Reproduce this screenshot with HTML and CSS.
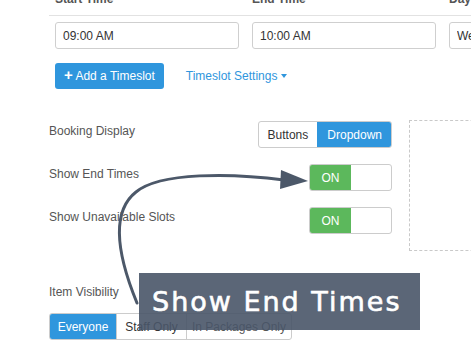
FILE: index.html
```html
<!DOCTYPE html>
<html lang="en">
<head>
    <meta charset="UTF-8">
    <meta name="viewport" content="width=device-width, initial-scale=1.0">
    <title>Timeslot Settings</title>
    <link rel="stylesheet" href="styles.css">
</head>
<body>
    <div class="page">
        <div class="slots">
            <div class="slot-head">
                <div class="col">Start Time</div>
                <div class="col">End Time</div>
                <div class="col">Day</div>
            </div>
            <div class="slot-row">
                <div class="col"><input class="field" type="text" value="09:00 AM"></div>
                <div class="col"><input class="field" type="text" value="10:00 AM"></div>
                <div class="col"><input class="field" type="text" value="Wednesday"></div>
            </div>
            <div class="slot-actions">
                <button class="btn btn-primary"><span class="plus">+</span> Add a Timeslot</button>
                <span class="link">Timeslot Settings <span class="caret"></span></span>
            </div>
        </div>

        <div class="settings">
            <div class="settings-list">
                <div class="setting">
                    <div class="label">Booking Display</div>
                    <div class="seg">
                        <div class="seg-item">Buttons</div>
                        <div class="seg-item active">Dropdown</div>
                    </div>
                </div>
                <div class="setting">
                    <div class="label">Show End Times</div>
                    <div class="toggle">
                        <div class="toggle-on">ON</div>
                        <div class="toggle-off"></div>
                    </div>
                </div>
                <div class="setting">
                    <div class="label">Show Unavailable Slots</div>
                    <div class="toggle">
                        <div class="toggle-on">ON</div>
                        <div class="toggle-off"></div>
                    </div>
                </div>
            </div>
            <div class="preview"></div>
        </div>

        <div class="visibility">
            <div class="label">Item Visibility</div>
            <div class="seg seg-vis">
                <div class="seg-item active">Everyone</div>
                <div class="seg-item">Staff Only</div>
                <div class="seg-item">In Packages Only</div>
            </div>
        </div>
    </div>

    <!-- annotation arrow -->
    <svg class="arrow" width="471" height="360" viewBox="0 0 471 360">
        <path d="M137 303 C121 264 108 214 136 192 C160 172 232 173 284 180" fill="none" stroke="#4c5869" stroke-width="3" stroke-linecap="round"/>
        <polygon points="281,170 308,181 280,189" fill="#4c5869"/>
    </svg>

    <div class="callout">Show End Times</div>
</body>
</html>
```

FILE: styles.css
```css
* {
    margin: 0;
    padding: 0;
    box-sizing: border-box;
}

html, body {
    width: 471px;
    height: 360px;
    overflow: hidden;
}

body {
    font-family: 'Liberation Sans', Arial, sans-serif;
    font-size: 12px;
    color: #333;
    background: #fff;
    position: relative;
}

.page {
    padding-left: 49px;
}

/* timeslot table */
.slots {
    margin-top: -8px;
}

.slot-head,
.slot-row {
    display: grid;
    grid-template-columns: 197px 197px 197px;
}

.slot-head {
    height: 24px;
    border-bottom: 1px solid #e2e2e2;
    font-weight: bold;
    color: #555;
    line-height: 14px;
}

.slot-head .col {
    padding: 0 6px;
}

.slot-row {
    padding-top: 6px;
}

.slot-row .col {
    padding-left: 6px;
}

.field {
    width: 184px;
    height: 27px;
    border: 1px solid #cfcfcf;
    border-radius: 3px;
    padding: 0 7px;
    font-family: inherit;
    font-size: 12px;
    color: #333;
    outline: none;
}

.slot-actions {
    display: flex;
    align-items: center;
    gap: 22px;
    padding-left: 6px;
    margin-top: 14px;
}

.btn {
    height: 26px;
    padding: 0 9px;
    border: none;
    border-radius: 3px;
    font-family: inherit;
    font-size: 12px;
}

.btn-primary {
    background: #2f96dd;
    color: #fff;
}

.plus {
    font-weight: bold;
    font-size: 15px;
    line-height: 10px;
}

.link {
    color: #2f96dd;
    display: flex;
    align-items: center;
    gap: 4px;
}

.caret {
    width: 0;
    height: 0;
    border-left: 3.5px solid transparent;
    border-right: 3.5px solid transparent;
    border-top: 4px solid #2f96dd;
}

/* settings */
.settings {
    display: flex;
    gap: 17px;
    margin-top: 32px;
}

.settings-list {
    flex: 0 0 343px;
    display: flex;
    flex-direction: column;
    gap: 16px;
}

.setting {
    display: flex;
    justify-content: space-between;
    align-items: flex-start;
}

.label {
    color: #555;
    padding-top: 3px;
}

.seg {
    display: flex;
    height: 27px;
    border: 1px solid #cccccc;
    border-radius: 3px;
    overflow: hidden;
}

.seg-item {
    display: flex;
    align-items: center;
    justify-content: center;
    padding: 0 9px;
    color: #333;
    white-space: nowrap;
}

.seg-item + .seg-item {
    border-left: 1px solid #cccccc;
}

.seg-item.active {
    background: #2f96dd;
    color: #fff;
    border-color: #2f96dd;
}

.toggle {
    display: flex;
    width: 83px;
    height: 27px;
    border: 1px solid #cccccc;
    border-radius: 3px;
    overflow: hidden;
}

.toggle-on {
    width: 41px;
    background: #5cb85c;
    color: #fff;
    display: flex;
    align-items: center;
    justify-content: center;
}

.toggle-off {
    flex: 1;
}

.preview {
    flex: 0 0 80px;
    height: 131px;
    margin-top: -1px;
    border: 1px dashed #c9c9c9;
}

/* visibility */
.visibility {
    margin-top: 34px;
}

.visibility .label {
    padding-top: 0;
    margin-bottom: 14px;
}

.seg-vis {
    width: 243px;
}

.seg-vis .seg-item {
    padding: 0 4px;
}

.seg-vis .seg-item:nth-child(1) { width: 66px; }
.seg-vis .seg-item:nth-child(2) { width: 70px; }
.seg-vis .seg-item:nth-child(3) { flex: 1; color: #555; }

/* annotation */
.arrow {
    position: absolute;
    left: 0;
    top: 0;
    pointer-events: none;
}

.callout {
    position: absolute;
    left: 139px;
    top: 273px;
    width: 281px;
    height: 57px;
    padding-left: 13px;
    display: flex;
    align-items: center;
    background: rgba(73, 85, 104, 0.9);
    color: #fff;
    font-family: 'DejaVu Sans', sans-serif;
    font-size: 27px;
    letter-spacing: 2px;
    -webkit-text-stroke: 0.6px #fff;
}
```
